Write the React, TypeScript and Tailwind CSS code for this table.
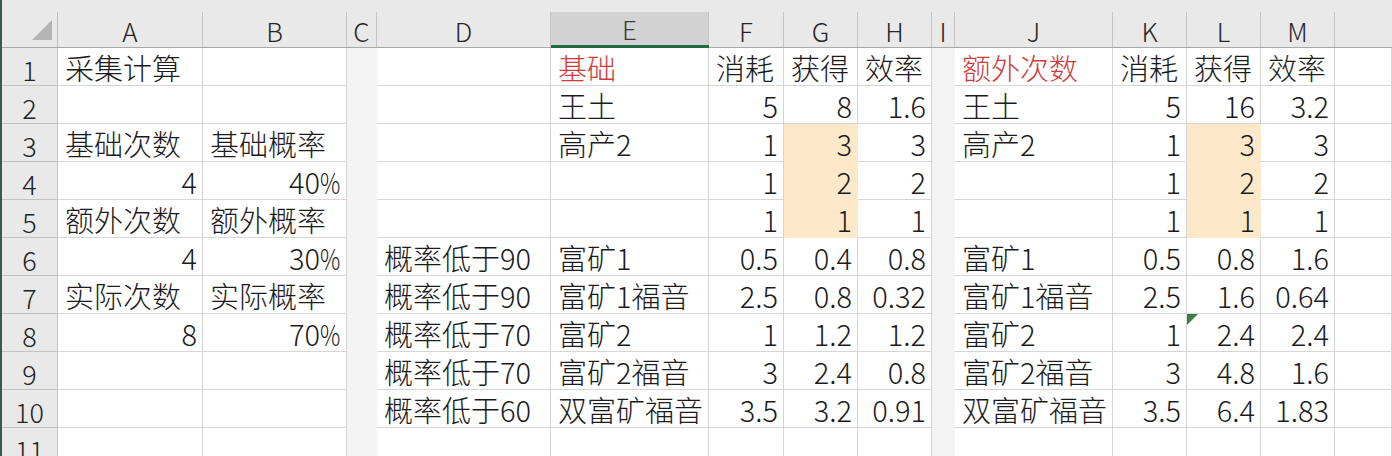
import React from "react";

type Cell = { t: string; r?: boolean; red?: boolean; y?: boolean; tri?: boolean };

const cols = [
  { k: "A", gray: false, label: "A" },
  { k: "B", gray: false, label: "B" },
  { k: "C", gray: true, label: "C" },
  { k: "D", gray: false, label: "D" },
  { k: "E", gray: false, label: "E" },
  { k: "F", gray: false, label: "F" },
  { k: "G", gray: false, label: "G" },
  { k: "H", gray: false, label: "H" },
  { k: "I", gray: true, label: "I" },
  { k: "J", gray: false, label: "J" },
  { k: "K", gray: false, label: "K" },
  { k: "L", gray: false, label: "L" },
  { k: "M", gray: false, label: "M" },
  { k: "N", gray: false, label: "" },
];

const s = (t: string): Cell => ({ t });
const n = (t: string): Cell => ({ t, r: true });

const rows: Record<string, Cell>[] = [
  { A: s("采集计算"), E: { t: "基础", red: true }, F: s("消耗"), G: s("获得"), H: s("效率"), J: { t: "额外次数", red: true }, K: s("消耗"), L: s("获得"), M: s("效率") },
  { E: s("王土"), F: n("5"), G: n("8"), H: n("1.6"), J: s("王土"), K: n("5"), L: n("16"), M: n("3.2") },
  { A: s("基础次数"), B: s("基础概率"), E: s("高产2"), F: n("1"), G: { t: "3", r: true, y: true }, H: n("3"), J: s("高产2"), K: n("1"), L: { t: "3", r: true, y: true }, M: n("3") },
  { A: n("4"), B: n("40%"), F: n("1"), G: { t: "2", r: true, y: true }, H: n("2"), K: n("1"), L: { t: "2", r: true, y: true }, M: n("2") },
  { A: s("额外次数"), B: s("额外概率"), F: n("1"), G: { t: "1", r: true, y: true }, H: n("1"), K: n("1"), L: { t: "1", r: true, y: true }, M: n("1") },
  { A: n("4"), B: n("30%"), D: s("概率低于90"), E: s("富矿1"), F: n("0.5"), G: n("0.4"), H: n("0.8"), J: s("富矿1"), K: n("0.5"), L: n("0.8"), M: n("1.6") },
  { A: s("实际次数"), B: s("实际概率"), D: s("概率低于90"), E: s("富矿1福音"), F: n("2.5"), G: n("0.8"), H: n("0.32"), J: s("富矿1福音"), K: n("2.5"), L: n("1.6"), M: n("0.64") },
  { A: n("8"), B: n("70%"), D: s("概率低于70"), E: s("富矿2"), F: n("1"), G: n("1.2"), H: n("1.2"), J: s("富矿2"), K: n("1"), L: { t: "2.4", r: true, tri: true }, M: n("2.4") },
  { D: s("概率低于70"), E: s("富矿2福音"), F: n("3"), G: n("2.4"), H: n("0.8"), J: s("富矿2福音"), K: n("3"), L: n("4.8"), M: n("1.6") },
  { D: s("概率低于60"), E: s("双富矿福音"), F: n("3.5"), G: n("3.2"), H: n("0.91"), J: s("双富矿福音"), K: n("3.5"), L: n("6.4"), M: n("1.83") },
  {},
];

function Pct({ t }: { t: string }) {
  if (t.endsWith("%")) {
    return (
      <span>
        {t.slice(0, -1)}
        <span className="inline-block scale-x-[0.78] origin-left -mr-[5px]">%</span>
      </span>
    );
  }
  return <span>{t}</span>;
}

export default function App() {
  return (
    <div className="w-[1392px] h-[456px] overflow-hidden bg-white border-l-2 border-[#3b5a4c] font-['Noto_Sans_CJK_SC',sans-serif] font-light text-[#1b1b1b]">
      <div className="grid grid-cols-[56px_145px_144px_30px_174px_158px_75px_74px_74px_23px_158px_74px_74px_74px_57px]">
        {/* header row */}
        <div className="h-[48px] bg-[#e9e9e9] border-b border-[#a9a9a9] flex flex-col">
          <div className="h-[12px]" />
          <div className="flex-1 border-r border-[#bdbdbd] relative">
            <svg className="absolute left-[30px] top-[8px]" width="20" height="20" viewBox="0 0 20 20">
              <polygon points="20,0 20,20 0,20" fill="#b4b4b4" />
            </svg>
          </div>
        </div>
        {cols.map((c) => {
          const sel = c.k === "E";
          return (
            <div key={c.k} className={`h-[48px] flex flex-col bg-[#e9e9e9] ${sel ? "border-b-[3px] border-[#1e6b41]" : "border-b border-[#a9a9a9]"}`}>
              <div className="h-[12px]" />
              <div className={`flex-1 flex items-end justify-center pb-[3px] text-[26px] leading-[26px] ${c.k === "N" ? "" : "border-r border-[#c4c4c4]"} ${sel ? "bg-[#d3d3d3] text-[#3a3a3a]" : "text-[#262626]"}`}>
                {c.label}
              </div>
            </div>
          );
        })}
        {/* body rows */}
        {rows.map((row, i) => (
          <React.Fragment key={i}>
            <div className="h-[38px] bg-[#e9e9e9] border-r border-b border-[#c2c2c2] flex items-end justify-center pb-[2px] text-[27px] leading-[27px] text-[#222]">
              {i + 1}
            </div>
            {cols.map((c) => {
              const cell = row[c.k];
              if (c.gray) {
                return <div key={c.k} className="h-[38px] bg-[#f3f3f3]" />;
              }
              const yellow = cell?.y;
              return (
                <div
                  key={c.k}
                  className={`relative h-[38px] flex items-end pb-[3px] whitespace-nowrap text-[29px] leading-[29px] border-r border-b ${yellow ? "bg-[#fde9ca] border-[#fde9ca]" : "border-[#d6d6d6]"} ${cell?.r ? "justify-end pr-[5px]" : "justify-start pl-[7px]"} ${cell?.red ? "text-[#cf3b3b]" : ""}`}
                >
                  {cell?.tri && (
                    <svg className="absolute left-0 top-0" width="11" height="11" viewBox="0 0 11 11">
                      <polygon points="0,0 11,0 0,11" fill="#3f7d48" />
                    </svg>
                  )}
                  {cell ? <Pct t={cell.t} /> : null}
                </div>
              );
            })}
          </React.Fragment>
        ))}
      </div>
    </div>
  );
}
